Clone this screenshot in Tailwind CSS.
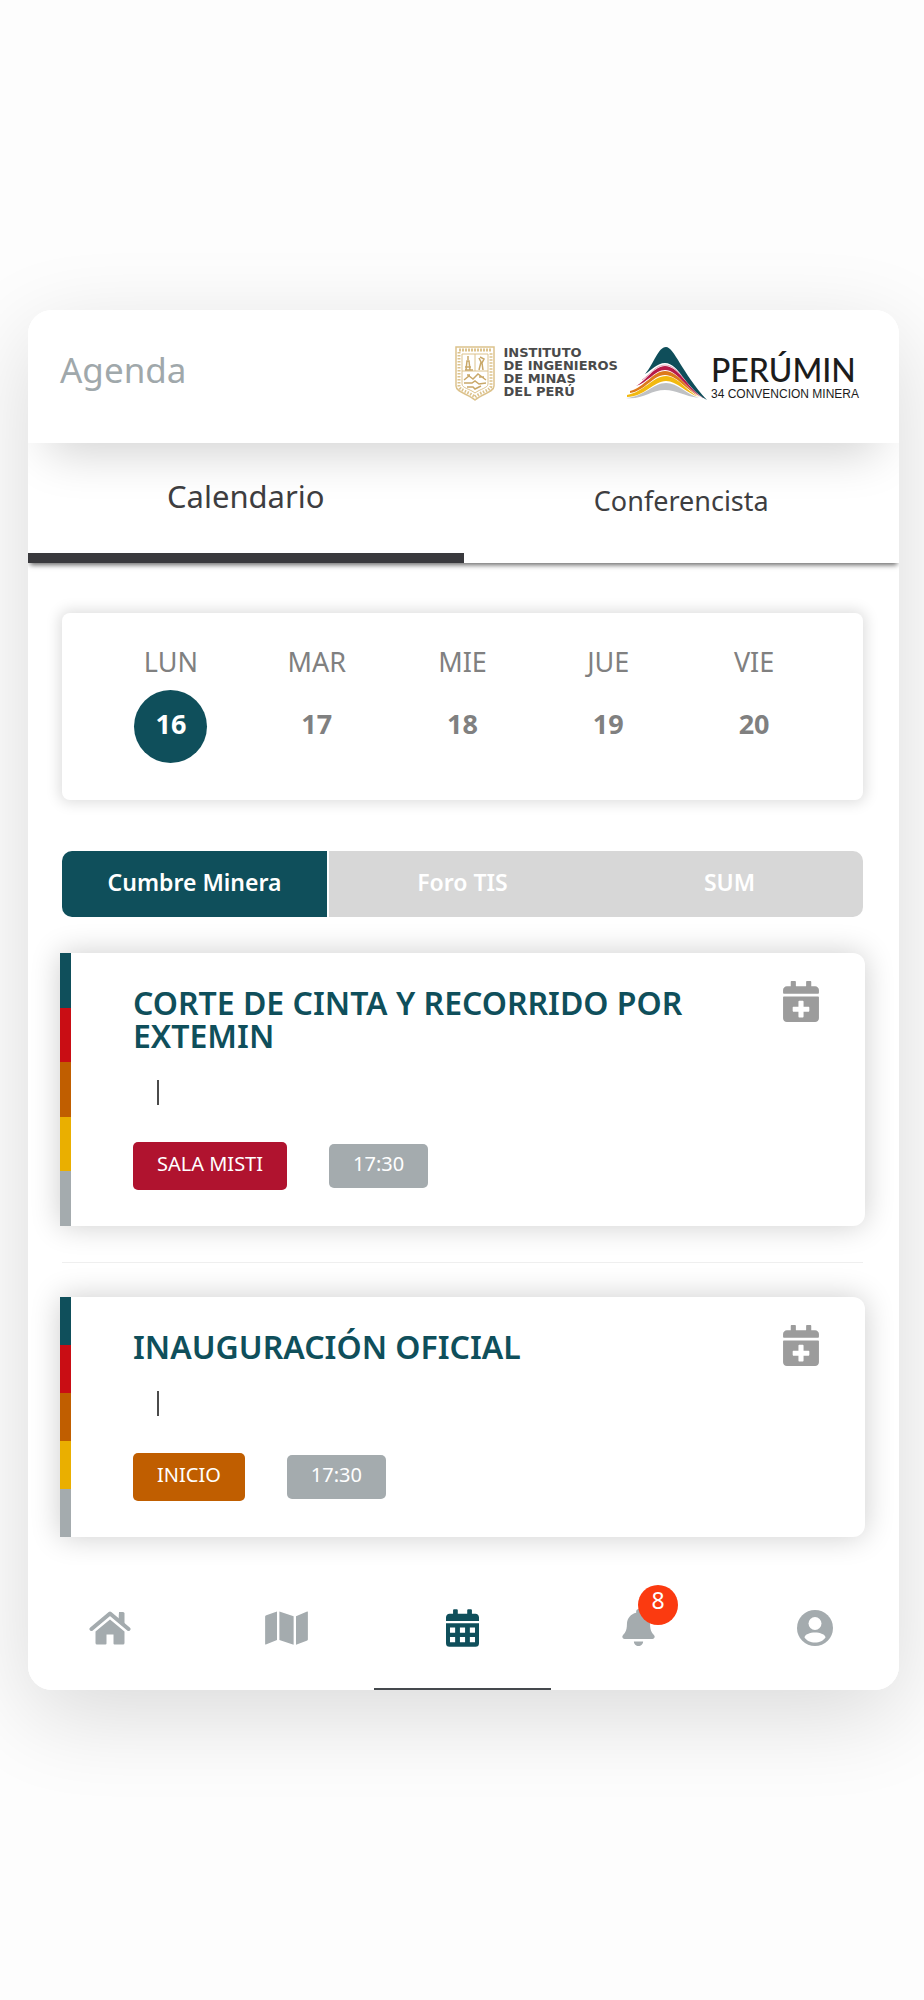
<!DOCTYPE html>
<html lang="es">
<head>
  <meta charset="UTF-8">
  <title>Agenda - PERÚMIN 34</title>
  <meta name="viewport" content="width=device-width, initial-scale=1.0">
  <script src="https://cdn.jsdelivr.net/npm/@tailwindcss/browser@4"></script>
</head>
<body class="bg-[#fdfdfd] flex items-center justify-center min-h-screen pl-7 pr-[25px] font-['Noto_Sans',sans-serif]">
  <!-- Icons shared by the event cards -->
  <svg class="hidden" aria-hidden="true">
    <symbol id="calendarPlus" viewBox="0 0 448 512">
      <path fill="currentColor" d="M436 160H12c-6.600 0-12-5.400-12-12v-36c0-26.500 21.500-48 48-48h48V12c0-6.600 5.400-12 12-12h40c6.600 0 12 5.400 12 12v52h128V12c0-6.600 5.400-12 12-12h40c6.600 0 12 5.400 12 12v52h48c26.500 0 48 21.500 48 48v36c0 6.600-5.400 12-12 12zM12 192h424c6.600 0 12 5.400 12 12v260c0 26.500-21.500 48-48 48H48c-26.500 0-48-21.500-48-48V204c0-6.600 5.400-12 12-12zm316 140c0-6.600-5.400-12-12-12h-60v-60c0-6.600-5.400-12-12-12h-40c-6.600 0-12 5.400-12 12v60h-60c-6.600 0-12 5.400-12 12v40c0 6.600 5.400 12 12 12h60v60c0 6.600 5.400 12 12 12h40c6.600 0 12-5.400 12-12v-60h60c6.600 0 12-5.400 12-12v-40z"/>
    </symbol>
  </svg>

  <div class="w-full bg-white rounded-3xl overflow-hidden shadow-[0_25px_90px_rgba(0,0,0,0.14)]">
    <!-- Header -->
    <header class="relative z-10 bg-white flex items-start justify-between h-[133px] pl-8 pr-10 pt-9 shadow-[0_30px_48px_-20px_rgba(0,0,0,0.18)]">
      <h1 class="text-[35px] leading-12 text-[#a0a8ab]">Agenda</h1>
      <div class="flex items-start">
        <!-- Instituto crest -->
        <svg class="w-10 h-14 mr-2" viewBox="0 0 40 56" fill="none" stroke="#dcc28c">
          <path d="M1 1h38v39c0 6-12 8-19 14C13 48 1 46 1 40z" stroke-width="1.500"/>
          <path d="M4 4h32" stroke-width="3" stroke-dasharray="2 1"/>
          <path d="M4 6v34c0 4 10 6 16 11 6-5 16-7 16-11V6" stroke-width="3" stroke-dasharray="1.500 1.500"/>
          <path d="M7 8h26v30c0 4-8 5-13 9-5-4-13-5-13-9zM20 8v17M7 25h26"/>
          <path d="M13 10v4m-2 10l1-9h2l1 9m-5-3h6M10 24h8M25 11l4 2-2 4 1 7m-4-12l2 4-2 8M9 34l5-4 4 3 5-5 8 6M9 37h8l3-2 4 3 7-1M12 41h6l2 2 6-3M12 29h3m9 2h5" stroke="#c9a869" stroke-width="1.500"/>
        </svg>
        <p class="font-['DejaVu_Sans',sans-serif] font-bold text-[13px] leading-[13px] text-[#4a4a4a] mr-2">
          INSTITUTO<br>DE INGENIEROS<br>DE MINAS<br>DEL PERÚ
        </p>
        <!-- Mountain logo -->
        <svg class="w-[81px] h-[53px] mr-1 mt-px" viewBox="0 0 81 53" fill="none">
          <path fill="#bfc1c4" d="M0 51C18 50 27 36 40 36c12 0 20 11 33 15C58 49 50 43 39 43 25 43 16 53 0 51z"/>
          <path fill="#f2b90f" d="M1 48C18 45 27 29 40 29c12 0 20 15 33 21C60 46 51 34 40 34 28 34 18 50 1 50z"/>
          <path fill="#dd7a1b" d="M4 44C18 41 27 24 39 24c13 0 22 18 35 26C60 43 51 28 39 28 27 28 19 44 4 46z"/>
          <path fill="#b71a48" d="M10 39C20 34 28 19 39 19c13 0 22 20 36 31C60 41 51 23 39 23 29 23 21 36 10 39z"/>
          <path stroke="#e3a4b8" d="M16 33C25 27 30 18 39 18c13 0 24 23 38 33"/>
          <path fill="#0f4e5a" d="M19 27C28 17 32 0 40 0s16 26 41 53C60 42 53 16 39 16c-8 0-13 7-20 11z"/>
        </svg>
        <div class="pt-2 text-[#1c1c1c] whitespace-nowrap">
          <p class="font-['Lato',sans-serif] font-medium text-[32px] leading-8">PERÚMIN</p>
          <p class="font-['Liberation_Sans',sans-serif] text-xs leading-4">34 CONVENCION MINERA</p>
        </div>
      </div>
    </header>

    <!-- Tabs -->
    <div class="grid grid-cols-2 h-[120px] text-[#3e3e41] shadow-[0_4px_5px_-2px_rgba(0,0,0,0.6)]" role="tablist">
      <button class="pb-1 text-[31px] border-b-10 border-[#39393d]" role="tab" aria-selected="true">Calendario</button>
      <button class="pb-1 text-[27px]" role="tab" aria-selected="false">Conferencista</button>
    </div>

    <main class="pl-8 pr-[34px] pt-[50px] pb-7">
      <!-- Days -->
      <div class="mx-0.5 mb-[51px] grid grid-cols-5 px-9 pt-[31px] pb-[37px] rounded-lg text-[27px] leading-9 text-[#808080] shadow-[0_0_14px_3px_rgba(0,0,0,0.13)]">
        <button class="flex flex-col items-center gap-[10px]">
          <span>LUN</span>
          <span class="flex items-center justify-center size-[73px] pb-1.5 rounded-full bg-[#0f4f5b] text-white font-bold">16</span>
        </button>
        <button class="flex flex-col items-center gap-[10px]">
          <span>MAR</span>
          <span class="flex items-center justify-center size-[73px] pb-1.5 rounded-full font-bold">17</span>
        </button>
        <button class="flex flex-col items-center gap-[10px]">
          <span>MIE</span>
          <span class="flex items-center justify-center size-[73px] pb-1.5 rounded-full font-bold">18</span>
        </button>
        <button class="flex flex-col items-center gap-[10px]">
          <span>JUE</span>
          <span class="flex items-center justify-center size-[73px] pb-1.5 rounded-full font-bold">19</span>
        </button>
        <button class="flex flex-col items-center gap-[10px]">
          <span>VIE</span>
          <span class="flex items-center justify-center size-[73px] pb-1.5 rounded-full font-bold">20</span>
        </button>
      </div>

      <!-- Categories -->
      <div class="mx-0.5 mb-9 grid grid-cols-3 h-[66px] rounded-[10px] overflow-hidden text-[23px] font-semibold text-white">
        <button class="bg-[#0f4f5b] border-r-2 border-white pb-1">Cumbre Minera</button>
        <button class="bg-[#d7d7d7] pb-1">Foro TIS</button>
        <button class="bg-[#d7d7d7] pb-1">SUM</button>
      </div>

      <!-- Events -->
      <article class="flex bg-white rounded-r-xl shadow-[0_0_30px_rgba(0,0,0,0.2)]">
        <div class="w-[11px] shrink-0 flex flex-col">
          <span class="flex-1 bg-[#0f4f5b]"></span>
          <span class="flex-1 bg-[#c90d14]"></span>
          <span class="flex-1 bg-[#c05e00]"></span>
          <span class="flex-1 bg-[#eaaf00]"></span>
          <span class="flex-1 bg-[#a4abae]"></span>
        </div>
        <div class="flex-1 pl-[62px] pt-[33px] pb-9">
          <h2 class="text-[32px] leading-[33px] font-semibold text-[#0f4f5b]">CORTE DE CINTA Y RECORRIDO POR EXTEMIN</h2>
          <div class="ml-6 mt-7 mb-[37px] w-[2px] h-[25px] bg-[#4b4b4b]"></div>
          <div class="flex items-center gap-[42px] text-xl text-white">
            <span class="px-6 pt-2 pb-3 rounded-[5px] bg-[#b0132f]">SALA MISTI</span>
            <span class="px-6 pt-1.5 pb-2.5 rounded-[5px] bg-[#a4abae]">17:30</span>
          </div>
        </div>
        <button class="self-start mt-7 ml-16 mr-[46px] text-[#9c9c9c]" aria-label="Agregar al calendario">
          <svg class="w-9 h-[41px]"><use href="#calendarPlus"/></svg>
        </button>
      </article>

      <hr class="mx-0.5 mt-9 mb-[34px] border-[#efefef]">

      <article class="flex bg-white rounded-r-xl shadow-[0_0_30px_rgba(0,0,0,0.2)]">
        <div class="w-[11px] shrink-0 flex flex-col">
          <span class="flex-1 bg-[#0f4f5b]"></span>
          <span class="flex-1 bg-[#c90d14]"></span>
          <span class="flex-1 bg-[#c05e00]"></span>
          <span class="flex-1 bg-[#eaaf00]"></span>
          <span class="flex-1 bg-[#a4abae]"></span>
        </div>
        <div class="flex-1 pl-[62px] pt-[33px] pb-9">
          <h2 class="text-[32px] leading-[33px] font-semibold text-[#0f4f5b]">INAUGURACIÓN OFICIAL</h2>
          <div class="ml-6 mt-7 mb-[37px] w-[2px] h-[25px] bg-[#4b4b4b]"></div>
          <div class="flex items-center gap-[42px] text-xl text-white">
            <span class="px-6 pt-2 pb-3 rounded-[5px] bg-[#c05e00]">INICIO</span>
            <span class="px-6 pt-1.5 pb-2.5 rounded-[5px] bg-[#a4abae]">17:30</span>
          </div>
        </div>
        <button class="self-start mt-7 ml-16 mr-[46px] text-[#9c9c9c]" aria-label="Agregar al calendario">
          <svg class="w-9 h-[41px]"><use href="#calendarPlus"/></svg>
        </button>
      </article>
    </main>

    <!-- Bottom navigation -->
    <nav class="relative bg-white -ml-1.5 -mr-1 grid grid-cols-5 h-[125px] text-[#a4abae]">
      <a href="#" class="flex items-center justify-center" aria-label="Inicio">
        <svg class="w-[42px] h-[34px]" viewBox="0 0 42 34">
          <path fill="currentColor" d="M30 1h4q1.500 0 1.500 1.500V15l-6-5z"/>
          <path fill="none" stroke="currentColor" stroke-width="4" stroke-linecap="round" stroke-linejoin="round" d="M2.500 18L21 2.500 39.500 18"/>
          <path fill="currentColor" d="M21 8.500l14.500 12V32q0 1.500-1.500 1.500h-8.500q-1 0-1-1V23.500h-7v9q0 1-1 1H8Q6.500 33.500 6.500 32V20.500z"/>
        </svg>
      </a>
      <a href="#" class="flex items-center justify-center" aria-label="Mapa">
        <svg class="w-[43px] h-[38px]" viewBox="0 0 576 512" fill="currentColor">
          <path d="M0 100v372q0 10 10 6l150-62V32L16 84Q0 90 0 100zM192 416l192 64V96L192 32zM566 34L416 96v384l144-52q16-6 16-16V40q0-10-10-6z"/>
        </svg>
      </a>
      <a href="#" class="flex items-center justify-center border-b-2 border-[#45494d] pt-[2px] text-[#0f4f5b]" aria-label="Agenda">
        <svg class="w-[33px] h-[38px]" viewBox="0 0 448 512" fill="currentColor">
          <path d="M0 192h448v272q0 48-48 48H48q-48 0-48-48zM54 250v70h70v-70zM189 250v70h70v-70zM324 250v70h70v-70zM54 378v70h70v-70zM189 378v70h70v-70zM324 378v70h70v-70z" fill-rule="evenodd"/>
          <path d="M400 64h-48V16c0-8.800-7.200-16-16-16h-32c-8.800 0-16 7.200-16 16v48H160V16c0-8.800-7.200-16-16-16h-32c-8.800 0-16 7.200-16 16v48H48C21.500 64 0 85.500 0 112v48h448v-48c0-26.500-21.500-48-48-48z"/>
        </svg>
      </a>
      <a href="#" class="flex items-center justify-center" aria-label="Notificaciones">
        <span class="relative">
          <svg class="w-[33px] h-[37px]" viewBox="0 0 448 512" fill="currentColor">
            <path d="M224 512c35.320 0 63.970-28.650 63.970-64H160.030c0 35.350 28.650 64 63.970 64zm215.390-149.710c-19.320-20.760-55.470-51.990-55.470-154.290 0-77.700-54.480-139.900-127.940-155.160V32c0-17.670-14.320-32-31.980-32s-31.980 14.330-31.980 32v20.840C118.560 68.100 64.080 130.300 64.080 208c0 102.300-36.150 133.530-55.470 154.290-6 6.450-8.660 14.160-8.610 21.710.11 16.400 12.980 32 32.100 32h383.800c19.120 0 32-15.600 32.100-32 .05-7.550-2.610-15.270-8.610-21.710z"/>
          </svg>
          <span class="absolute -top-6 left-4 size-10 pb-2.5 rounded-full bg-[#fb3a10] flex items-center justify-center text-[23px] leading-6 text-white">8</span>
        </span>
      </a>
      <a href="#" class="flex items-center justify-center" aria-label="Perfil">
        <svg class="size-9" viewBox="0 0 36 36">
          <circle cx="18" cy="18" r="18" fill="currentColor"/>
          <circle cx="18" cy="13.500" r="6.500" fill="#fff"/>
          <path fill="#fff" d="M7.500 27.500c0-3 5.500-5 10.500-5s10.500 2 10.500 5c-2 3-6 5-10.500 5s-8.500-2-10.500-5z"/>
        </svg>
      </a>
    </nav>
  </div>
</body>
</html>
